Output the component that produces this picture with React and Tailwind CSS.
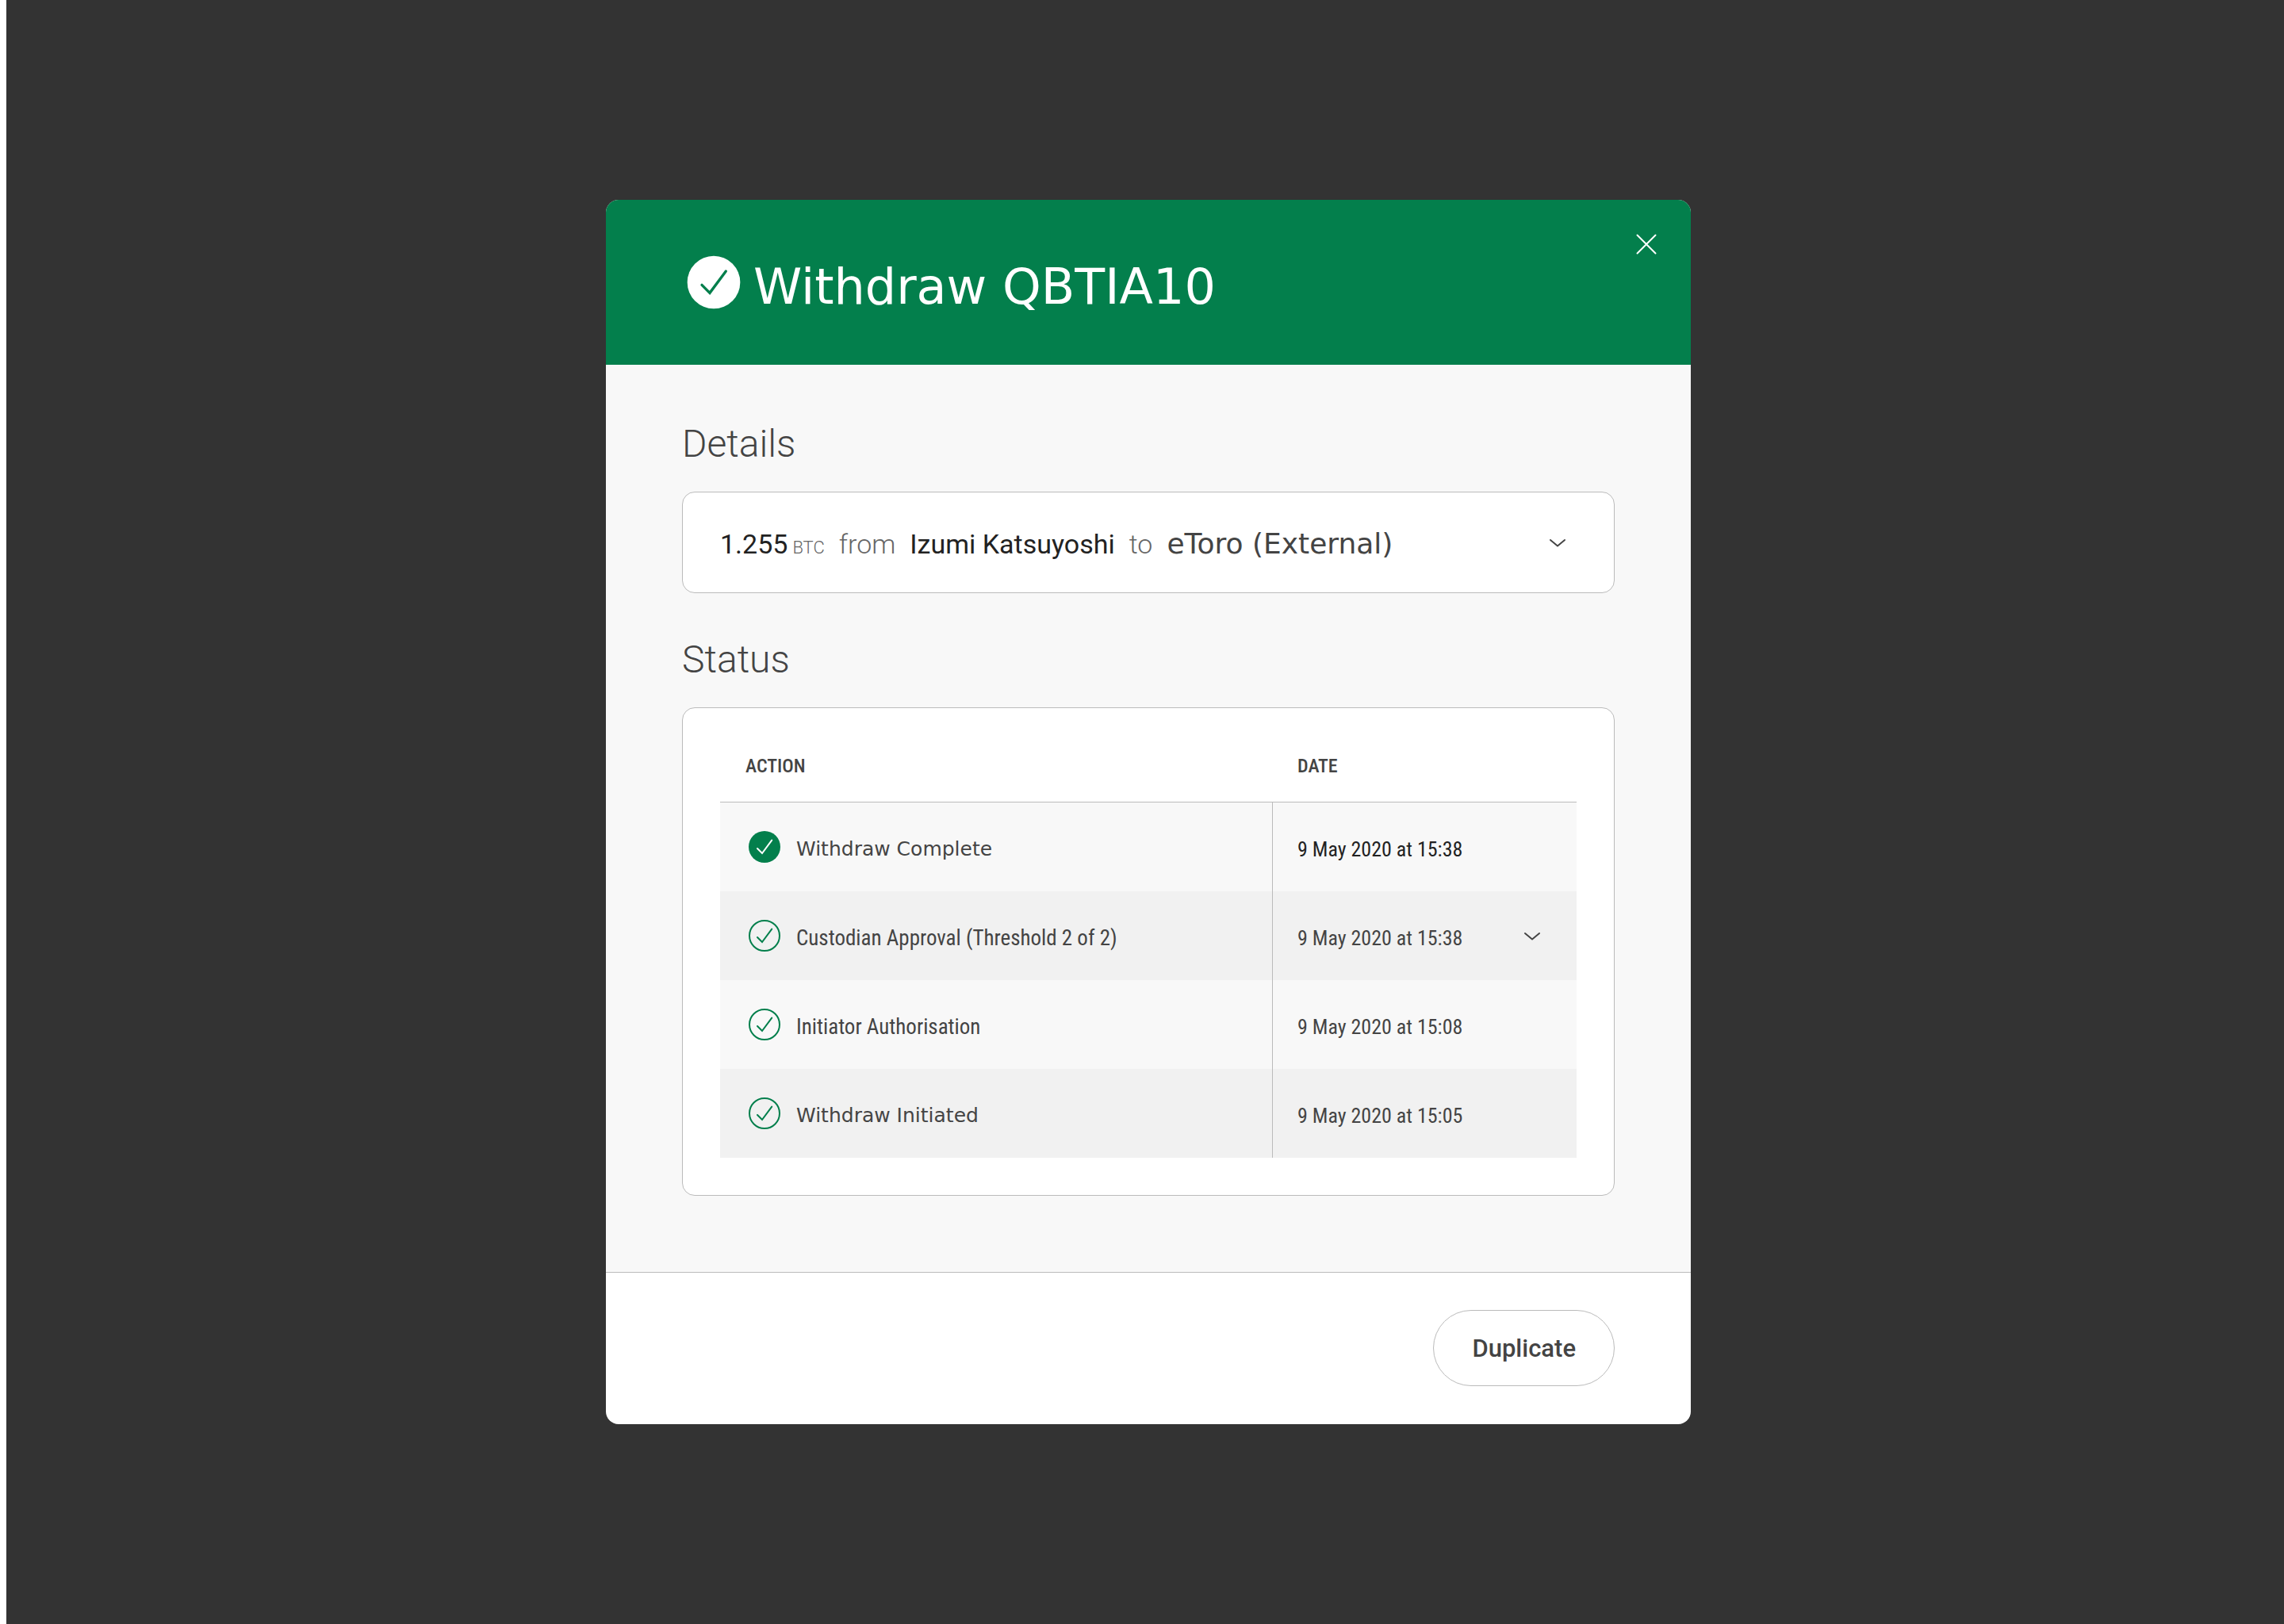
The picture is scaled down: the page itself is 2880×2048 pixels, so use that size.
const verdana = "font-['DejaVu_Sans',sans-serif]";
const condensed = "font-['Roboto_Condensed',Roboto,sans-serif]";

const rows = [
  { action: "Withdraw Complete", date: "9 May 2020 at 15:38", done: true, wide: true },
  { action: "Custodian Approval (Threshold 2 of 2)", date: "9 May 2020 at 15:38", expandable: true },
  { action: "Initiator Authorisation", date: "9 May 2020 at 15:08" },
  { action: "Withdraw Initiated", date: "9 May 2020 at 15:05", wide: true },
];

function CheckCircle({ className, filled, tick }) {
  return (
    <svg viewBox="0 0 24 24" fill="none" className={className} aria-hidden="true">
      {filled ? (
        <circle cx="12" cy="12" r="10" fill="currentColor" />
      ) : (
        <circle cx="12" cy="12" r="9.5" stroke="currentColor" />
      )}
      <path d="M7.5 13 10.5 16 16.6 7.8" stroke={tick} strokeLinecap="round" />
    </svg>
  );
}

function Chevron() {
  return (
    <svg viewBox="0 0 48 48" fill="none" className="size-12" aria-hidden="true">
      <path d="M15 21 24 28.5 33 21" stroke="#444" strokeWidth="2" strokeLinecap="round" />
    </svg>
  );
}

export default function App() {
  return (
    <main className="flex min-h-screen items-center justify-center border-l-8 border-white bg-[#333] pl-2 font-[Roboto,sans-serif] text-[#444]">
      <section
        role="dialog"
        aria-labelledby="dialog-title"
        className="w-full max-w-[1368px] overflow-hidden rounded-2xl bg-white"
      >
        <header className="flex items-center bg-[#037f4c] py-16 pr-8 pl-24 text-white">
          <CheckCircle className="size-20 shrink-0" filled tick="#037f4c" />
          <h1 id="dialog-title" className={`ml-2.5 flex-1 pt-3 text-[62px] leading-[68px] ${verdana}`}>
            Withdraw QBTIA10
          </h1>
          <button type="button" aria-label="Close" className="-mt-8 self-start">
            <svg viewBox="0 0 48 48" fill="none" className="size-12" aria-hidden="true">
              <path d="M12.5 12.5 35.5 35.5M35.5 12.5 12.5 35.5" stroke="#fff" strokeWidth="2" strokeLinecap="round" />
            </svg>
          </button>
        </header>

        <div className="bg-[#f8f8f8] px-24 pt-[72px] pb-24">
          <h2 className="mb-8 text-[48px] leading-[56px] font-light">Details</h2>
          <div className="mb-14 flex h-32 items-center justify-between rounded-2xl border border-[#bbb] bg-white px-[47px]">
            <p className="flex items-baseline gap-4.5 pt-2 text-[34px] leading-12 font-light text-[#666]">
              <span className="flex items-baseline gap-1.5">
                <span className="font-normal text-[#222]">1.255</span>
                <span className="text-[22px]">BTC</span>
              </span>
              <span>from</span>
              <span className="font-normal text-[#222]">Izumi Katsuyoshi</span>
              <span>to</span>
              <span className={`text-[36px] font-normal text-[#444] ${verdana}`}>eToro (External)</span>
            </p>
            <button type="button" aria-label="Show details">
              <Chevron />
            </button>
          </div>

          <h2 className="mb-8 text-[48px] leading-[56px] font-light">Status</h2>
          <div className="rounded-2xl border border-[#bbb] bg-white p-[47px]">
            <table className="w-full border-separate border-spacing-0 text-left">
              <thead>
                <tr className={`text-[24px] leading-8 ${condensed}`}>
                  <th className="h-[72px] border-b border-[#bbb] px-8 pb-5 font-medium">ACTION</th>
                  <th className="h-[72px] w-[384px] border-b border-[#bbb] px-8 pb-5 font-medium">DATE</th>
                </tr>
              </thead>
              <tbody>
                {rows.map((row) => (
                  <tr key={row.action} className="odd:bg-[#f8f8f8] even:bg-[#f1f1f1]">
                    <td className="h-28 px-8">
                      <div className="flex items-center gap-4">
                        <CheckCircle
                          className="size-12 text-[#037f4c]"
                          filled={row.done}
                          tick={row.done ? "#fff" : "currentColor"}
                        />
                        <span className={row.wide ? `pt-1.5 text-[25px] leading-8 ${verdana}` : `pt-1.5 text-[27px] leading-8 ${condensed}`}>
                          {row.action}
                        </span>
                      </div>
                    </td>
                    <td className="h-28 border-l border-[#bbb] pr-8 pl-[31px]">
                      <div className="flex items-center justify-between">
                        <span className={`pt-1.5 text-[26px] leading-8 ${condensed} ${row.done ? "text-[#222]" : ""}`}>{row.date}</span>
                        {row.expandable && (
                          <button type="button" aria-label="Show approvals">
                            <Chevron />
                          </button>
                        )}
                      </div>
                    </td>
                  </tr>
                ))}
              </tbody>
            </table>
          </div>
        </div>

        <footer className="flex justify-end border-t border-[#bbb] px-24 pt-[47px] pb-12">
          <button type="button" className="h-24 rounded-full border border-[#bbb] px-12 pt-0.5 text-[31px] leading-10 font-medium">
            Duplicate
          </button>
        </footer>
      </section>
    </main>
  );
}
